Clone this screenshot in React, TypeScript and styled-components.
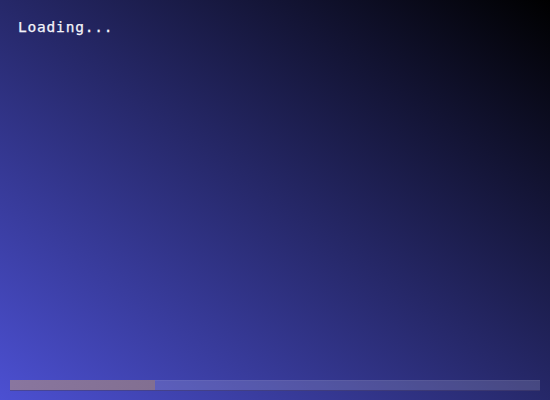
import React from 'react'
import styled, { createGlobalStyle } from 'styled-components'

const GlobalStyle = createGlobalStyle`
  html, body {
    margin: 0;
    padding: 0;
    width: 100%;
    height: 100%;
    background: #000;
  }
  #root {
    width: 100%;
    height: 100%;
  }
`

const progress = 0.274

export default function App() {
  return (
    <>
      <GlobalStyle />
      <Screen>
        <Label>Loading...</Label>
        <Spacer />
        <Track>
          <Fill style={{ width: `${progress * 100}%` }} />
        </Track>
      </Screen>
    </>
  )
}

const Screen = styled.div`
  width: 550px;
  height: 400px;
  box-sizing: border-box;
  display: flex;
  flex-direction: column;
  padding: 18px 10px 9px;
  background: linear-gradient(to top right, #4c50d2 0%, #000 100%);
  overflow: hidden;
`

const Label = styled.div`
  margin-left: 8px;
  font-family: 'DejaVu Sans Mono', 'Liberation Mono', monospace;
  font-size: 14.5px;
  letter-spacing: 0.8px;
  line-height: 18px;
  color: #f4f4fa;
  -webkit-text-stroke: 0.25px #f4f4fa;
`

const Spacer = styled.div`
  flex: 1;
`

const Track = styled.div`
  height: 11px;
  display: flex;
  box-sizing: border-box;
  background: rgba(205, 205, 235, 0.2);
  border-bottom: 1px solid rgba(40, 30, 80, 0.45);
  box-shadow: inset 0 1px 0 rgba(255, 255, 255, 0.06);
`

const Fill = styled.div`
  height: 100%;
  background: linear-gradient(to right, #89769f, #826f91);
`
